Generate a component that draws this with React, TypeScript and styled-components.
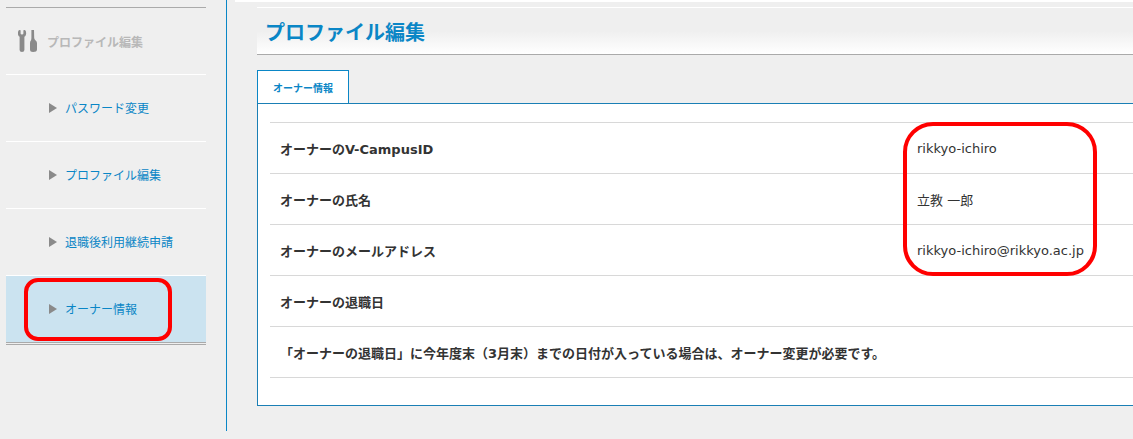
import React from "react"
import styled, { createGlobalStyle } from "styled-components"

const GlobalStyle = createGlobalStyle`
  html, body {
    margin: 0;
    padding: 0;
    background: #efefef;
    overflow: hidden;
  }
  body {
    font-family: "DejaVu Sans", "Noto Sans CJK JP", sans-serif;
    color: #333;
  }
`

const Page = styled.div`
  display: flex;
  width: 1133px;
  height: 439px;
  overflow: hidden;
`

const SideColumn = styled.div`
  width: 227px;
  flex: none;
  height: 431px;
  padding: 7px 20px 0 6px;
  box-sizing: border-box;
  border-right: 1px solid #0a86c6;
`

const SideMenu = styled.nav`
  border-top: 1px solid #aaa;
  display: flex;
  flex-direction: column;
`

const SideHeading = styled.div`
  height: 66px;
  border-bottom: 1px solid #fff;
  display: flex;
  align-items: center;
  padding-left: 12px;
  gap: 10px;
  font-size: 12px;
  font-weight: 700;
  color: #b8b8b8;
`

const MenuItem = styled.div<{ $active?: boolean }>`
  position: relative;
  height: 67px;
  display: flex;
  align-items: center;
  padding: 0 0 1px 43px;
  box-sizing: border-box;
  gap: 8px;
  font-size: 12px;
  color: #0a86c6;
  background: ${(p) => (p.$active ? "#cbe3f0" : "transparent")};
  border-bottom: ${(p) => (p.$active ? "1px solid #aaa" : "1px solid #fff")};
`

const MenuEnd = styled.div`
  height: 1px;
  margin-top: 1px;
  background: #aaa;
`

const Arrow = styled.span`
  width: 0;
  height: 0;
  border-left: 8px solid #8a8a8a;
  border-top: 5px solid transparent;
  border-bottom: 5px solid transparent;
`

const Highlight = styled.div`
  position: absolute;
  box-sizing: border-box;
  border: 4px solid #f00;
`

const MenuHighlight = styled(Highlight)`
  left: 18px;
  top: 2px;
  width: 148px;
  height: 63px;
  border-radius: 14px;
`

const Main = styled.main`
  flex: 1;
  min-width: 0;
  margin-left: 8px;
`

const TopStrip = styled.div`
  height: 2px;
  background: #fff;
`

const MainBody = styled.div`
  padding: 5px 0 0 22px;
`

const TitleBar = styled.header`
  height: 46px;
  border-top: 1px solid #fff;
  border-bottom: 1px solid #aaa;
  background: linear-gradient(#efefef 50%, #fff);
  display: flex;
  align-items: center;
  padding: 0 0 0 8px;
`

const Title = styled.h1`
  margin: 0;
  font-size: 20px;
  font-weight: 700;
  color: #0a86c6;
`

const Tabs = styled.div`
  display: flex;
  margin-top: 15px;
`

const Tab = styled.div`
  width: 92px;
  height: 33px;
  box-sizing: border-box;
  border: 1px solid #0a86c6;
  border-bottom: 0;
  background: #fff;
  display: flex;
  align-items: center;
  justify-content: center;
  font-size: 10px;
  font-weight: 700;
  color: #0a86c6;
`

const Panel = styled.section`
  position: relative;
  width: 900px;
  height: 303px;
  box-sizing: border-box;
  background: #fff;
  border: 1px solid #1a7fb5;
  padding: 18px 0 0 12px;
`

const InfoTable = styled.div`
  border-top: 1px solid #d8d8d8;
`

const InfoRow = styled.div`
  height: 50px;
  border-bottom: 1px solid #d8d8d8;
  display: grid;
  grid-template-columns: 637px 1fr;
  align-items: center;
  padding-left: 10px;
  font-size: 13px;
`

const Label = styled.div`
  font-weight: 700;
  color: #333;
  white-space: nowrap;
`

const Value = styled.div`
  color: #333;
`

const ValueHighlight = styled(Highlight)`
  left: 645px;
  top: 18px;
  width: 194px;
  height: 154px;
  border-radius: 30px;
`

function ToolsIcon() {
  return (
    <svg width="19" height="22" viewBox="0 0 19 22">
      <path
        fill="#8a8a8a"
        d="M1 0 L2.6 0.2 V3.6 Q2.6 4.6 4 4.6 Q5.4 4.6 5.4 3.6 V0.2 L7 0 Q8.6 1.4 8 4.4 Q7.6 6 6.4 6.8 V20 Q6.4 22 4 22 Q1.6 22 1.6 20 V6.8 Q0.4 6 0 4.4 Q-0.4 1.4 1 0 Z"
      />
      <path
        fill="#8a8a8a"
        d="M13.4 0 H16 L16.2 8 Q16.4 9.4 17.4 10.2 Q19 11.4 19 13 V19.5 Q19 22 15 22 Q12 22 12 19.5 V13 Q12 11.4 13 10.2 Q13.4 9.4 13.4 8 Z"
      />
    </svg>
  )
}

const rows = [
  { label: "オーナーのV-CampusID", value: "rikkyo-ichiro" },
  { label: "オーナーの氏名", value: "立教 一郎" },
  { label: "オーナーのメールアドレス", value: "rikkyo-ichiro@rikkyo.ac.jp" },
  { label: "オーナーの退職日", value: "" },
  { label: "「オーナーの退職日」に今年度末（3月末）までの日付が入っている場合は、オーナー変更が必要です。", value: "" }
]

export default function App() {
  return (
    <Page>
      <GlobalStyle />
      <SideColumn>
        <SideMenu>
          <SideHeading>
            <ToolsIcon />
            プロファイル編集
          </SideHeading>
          <MenuItem><Arrow />パスワード変更</MenuItem>
          <MenuItem><Arrow />プロファイル編集</MenuItem>
          <MenuItem><Arrow />退職後利用継続申請</MenuItem>
          <MenuItem $active>
            <Arrow />オーナー情報
            <MenuHighlight />
          </MenuItem>
          <MenuEnd />
        </SideMenu>
      </SideColumn>
      <Main>
        <TopStrip />
        <MainBody>
          <TitleBar>
            <Title>プロファイル編集</Title>
          </TitleBar>
          <Tabs>
            <Tab>オーナー情報</Tab>
          </Tabs>
          <Panel>
            <InfoTable>
              {rows.map((row) => (
                <InfoRow key={row.label}>
                  <Label>{row.label}</Label>
                  <Value>{row.value}</Value>
                </InfoRow>
              ))}
            </InfoTable>
            <ValueHighlight />
          </Panel>
        </MainBody>
      </Main>
    </Page>
  )
}
